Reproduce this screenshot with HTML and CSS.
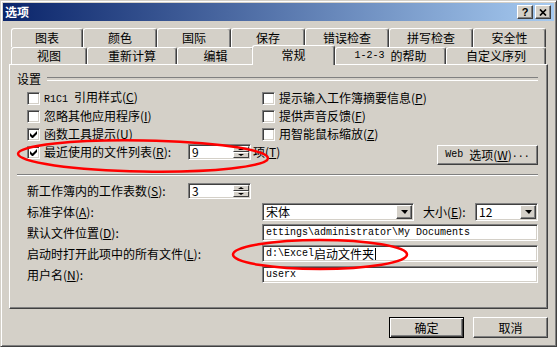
FILE: index.html
```html
<!DOCTYPE html>
<html>
<head>
	<meta charset="UTF-8">
	<title>选项</title>
	<link rel="stylesheet" href="styles.css">
</head>
<body>
	<div class="window">
		<div class="caption">
			<span class="caption-title">选项</span>
			<span class="cap-btn">?</span>
			<span class="cap-btn close">
				<svg width="8" height="7" viewBox="0 0 8 7"><path d="M1 0.5l6 6M7 0.5l-6 6" stroke="#000" stroke-width="1.7"/></svg>
			</span>
		</div>
		<div class="tabs">
			<div class="tab-row back">
				<div class="tab">图表</div>
				<div class="tab">颜色</div>
				<div class="tab">国际</div>
				<div class="tab">保存</div>
				<div class="tab">错误检查</div>
				<div class="tab">拼写检查</div>
				<div class="tab">安全性</div>
			</div>
			<div class="tab-row front">
				<div class="tab">视图</div>
				<div class="tab">重新计算</div>
				<div class="tab">编辑</div>
				<div class="tab active">常规</div>
				<div class="tab"><span class="en">1-2-3&nbsp;</span>的帮助</div>
				<div class="tab">自定义序列</div>
			</div>
		</div>
		<div class="panel">
			<div class="group-head"><span>设置</span></div>
			<div class="checks">
				<div class="check"><span class="box"></span><span><span class="en">R1C1&nbsp;</span>引用样式(<u>C</u>)</span></div>
				<div class="check"><span class="box"></span><span>提示输入工作簿摘要信息(<u>P</u>)</span></div>
				<div class="check"><span class="box"></span><span>忽略其他应用程序(<u>I</u>)</span></div>
				<div class="check"><span class="box"></span><span>提供声音反馈(<u>F</u>)</span></div>
				<div class="check"><span class="box"><svg width="7" height="7" viewBox="0 0 7 7"><path d="M0 2v3l2 2h1l4-4V0L2.5 4.5z"/></svg></span><span>函数工具提示(<u>U</u>)</span></div>
				<div class="check"><span class="box"></span><span>用智能鼠标缩放(<u>Z</u>)</span></div>
				<div class="check recent">
					<span class="box"><svg width="7" height="7" viewBox="0 0 7 7"><path d="M0 2v3l2 2h1l4-4V0L2.5 4.5z"/></svg></span>
					<span class="recent-label">最近使用的文件列表(<u>R</u>):</span>
					<span class="spin">
						<span class="spin-val">9</span>
						<span class="spin-btns"><span class="spin-btn up"></span><span class="spin-btn down"></span></span>
					</span>
					<span class="unit">项(<u>T</u>)</span>
				</div>
				<div class="btn web"><span class="en">Web&nbsp;</span>选项(<u>W</u>)<span class="en">...</span></div>
			</div>
			<div class="sep"></div>
			<div class="fields">
				<div class="row-label">
					<span class="sheets-label">新工作簿内的工作表数(<u>S</u>):</span>
					<span class="spin">
						<span class="spin-val">3</span>
						<span class="spin-btns"><span class="spin-btn up"></span><span class="spin-btn down"></span></span>
					</span>
				</div>
				<div></div>
				<div class="row-label">标准字体(<u>A</u>):</div>
				<div class="font-row">
					<span class="combo font-name"><span class="combo-val">宋体</span><span class="combo-btn"></span></span>
					<span class="size-label">大小(<u>E</u>):</span>
					<span class="combo font-size"><span class="combo-val">12</span><span class="combo-btn"></span></span>
				</div>
				<div class="row-label">默认文件位置(<u>D</u>):</div>
				<div class="text"><span class="en">ettings\administrator\My Documents</span></div>
				<div class="row-label">启动时打开此项中的所有文件(<u>L</u>):</div>
				<div class="text"><span class="en">d:\Excel</span>启动文件夹<span class="caret"></span></div>
				<div class="row-label">用户名(<u>N</u>):</div>
				<div class="text"><span class="en">userx</span></div>
			</div>
		</div>
		<div class="actions">
			<div class="btn default">确定</div>
			<div class="btn">取消</div>
		</div>
		<!-- 红色标注圈 -->
		<svg class="marks" width="557" height="347" viewBox="0 0 557 347">
			<ellipse cx="143" cy="156" rx="125" ry="15.5" transform="rotate(1 143 156)" fill="none" stroke="#f00" stroke-width="2.5"/>
			<ellipse cx="320" cy="254.5" rx="87" ry="14.5" fill="none" stroke="#f00" stroke-width="2.5"/>
		</svg>
	</div>
</body>
</html>
```
FILE: styles.css
```css
*{margin: 0;padding: 0;box-sizing: border-box;}
body{width: 557px;height: 347px;overflow: hidden;background: #d4d0c8;color: #000;font: 12px/14px "Noto Sans CJK SC", sans-serif;}
u{text-decoration: underline;text-underline-offset: 1px;}
.en{font: 10px/12px "Liberation Mono", monospace;}

.window{position: relative;width: 557px;height: 347px;padding: 2px;border: 1px solid;border-color: #d4d0c8 #404040 #404040 #d4d0c8;box-shadow: inset 1px 1px #fff, inset -1px -1px #808080;}

/* 标题栏 */
.caption{display: flex;align-items: center;height: 18px;padding: 0 3px 0 2px;background: linear-gradient(to right, #0a246a, #a6caf0);color: #fff;font-weight: bold;}
.caption-title{flex: 1;}
.cap-btn{display: flex;align-items: center;justify-content: center;width: 16px;height: 14px;background: #d4d0c8;border: 1px solid;border-color: #fff #404040 #404040 #fff;box-shadow: inset -1px -1px #808080;color: #000;font: bold 11px/1 "Liberation Sans", sans-serif;}
.cap-btn.close{margin-left: 2px;}

/* 选项卡 */
.tabs{margin-top: 7px;padding-left: 8px;}
.tab-row{display: flex;}
.tab-row.back{height: 19px;}
.tab-row.front{height: 17px;}
.tab{display: flex;align-items: center;justify-content: center;flex: none;height: 100%;white-space: nowrap;background: #d4d0c8;border: 1px solid;border-bottom: 0;border-color: #fff #404040 #fff #fff;border-radius: 3px 3px 0 0;box-shadow: inset -1px 0 #808080;}
.back .tab:nth-child(1){width: 72px;}
.back .tab:nth-child(2){width: 74px;}
.back .tab:nth-child(3){width: 74px;}
.back .tab:nth-child(4){width: 74px;}
.back .tab:nth-child(5){width: 84px;}
.back .tab:nth-child(6){width: 84px;}
.back .tab:nth-child(7){width: 73px;}
.front .tab:nth-child(1){width: 76px;}
.front .tab:nth-child(2){width: 90px;}
.front .tab:nth-child(3){width: 77px;}
.front .tab:nth-child(4){width: 83px;}
.front .tab:nth-child(5){width: 111px;}
.front .tab:nth-child(6){width: 100px;}
.tab.active{position: relative;z-index: 1;height: 20px;margin: -2px 0 -1px -2px;padding-bottom: 2px;}

/* 面板 */
.panel{width: 539px;height: 245px;margin-left: 6px;padding: 7px 9px 0 7px;border: 1px solid;border-color: #fff #404040 #404040 #fff;box-shadow: inset -1px -1px #808080;}
.group-head{display: flex;align-items: center;height: 14px;}
.group-head::after{content: "";flex: 1;height: 2px;margin-left: 6px;border-top: 1px solid #808080;border-bottom: 1px solid #fff;}

.checks{display: grid;grid-template-columns: 235px 1fr;grid-template-rows: 18px 18px 18px 22px;margin-top: 3px;padding-left: 10px;}
.check{display: flex;align-items: center;gap: 4px;height: 18px;white-space: nowrap;}
.check > *{flex: none;}
.box{display: flex;align-items: center;justify-content: center;flex: none;width: 13px;height: 13px;background: #fff;border: 1px solid;border-color: #808080 #fff #fff #808080;box-shadow: inset 1px 1px #404040, inset -1px -1px #d4d0c8;}
.recent-label{width: 140px;}
.unit{margin-left: -2px;}
.btn{display: flex;align-items: center;justify-content: center;width: 75px;height: 21px;white-space: nowrap;background: #d4d0c8;border: 1px solid;border-color: #fff #404040 #404040 #fff;box-shadow: inset -1px -1px #808080;}
.btn.web{justify-self: end;align-self: start;width: 101px;height: 20px;margin-top: 2px;}
.btn.default{border-color: #000;box-shadow: inset 1px 1px #fff, inset -1px -1px #404040, inset -2px -2px #808080;}

.sep{height: 2px;margin-top: 9px;border-top: 1px solid #808080;border-bottom: 1px solid #fff;}

.fields{display: grid;grid-template-columns: 235px 276px;grid-auto-rows: 21px;align-items: center;margin-top: 4px;padding-left: 10px;}
.row-label{display: flex;align-items: center;white-space: nowrap;}
.row-label > *{flex: none;}
.sheets-label{width: 161px;}

/* 输入框 */
.spin, .combo, .text{display: flex;background: #fff;border: 1px solid;border-color: #808080 #fff #fff #808080;box-shadow: inset 1px 1px #404040, inset -1px -1px #d4d0c8;}
.spin{width: 63px;height: 16px;padding: 1px;}
.spin-val{flex: 1;padding-left: 2px;line-height: 12px;}
.spin-btns{display: flex;flex-direction: column;width: 16px;}
.spin-btn{display: flex;align-items: center;justify-content: center;flex: 1;background: #d4d0c8;border: 1px solid;border-color: #fff #404040 #404040 #fff;}
.spin-btn::after{content: "";border-left: 3px solid transparent;border-right: 3px solid transparent;}
.spin-btn.up::after{border-bottom: 2px solid #000;}
.spin-btn.down::after{border-top: 2px solid #000;}

.font-row{display: flex;align-items: center;}
.combo{height: 18px;padding: 1px;}
.combo-val{flex: 1;padding-left: 2px;line-height: 14px;}
.combo-btn{display: flex;align-items: center;justify-content: center;width: 16px;background: #d4d0c8;border: 1px solid;border-color: #fff #404040 #404040 #fff;box-shadow: inset -1px -1px #808080;}
.combo-btn::after{content: "";border-top: 4px solid #000;border-left: 4px solid transparent;border-right: 3px solid transparent;}
.font-name{width: 152px;}
.size-label{margin-left: 9px;white-space: nowrap;}
.font-size{width: 63px;margin-left: auto;}
.text{align-items: center;width: 276px;height: 17px;padding: 0 3px;white-space: nowrap;overflow: hidden;}
.caret{width: 1px;height: 12px;margin-left: 1px;background: #000;}

.actions{display: flex;justify-content: flex-end;gap: 9px;margin-top: 8px;padding-right: 6px;}

.marks{position: absolute;left: -1px;top: -1px;pointer-events: none;}
```
